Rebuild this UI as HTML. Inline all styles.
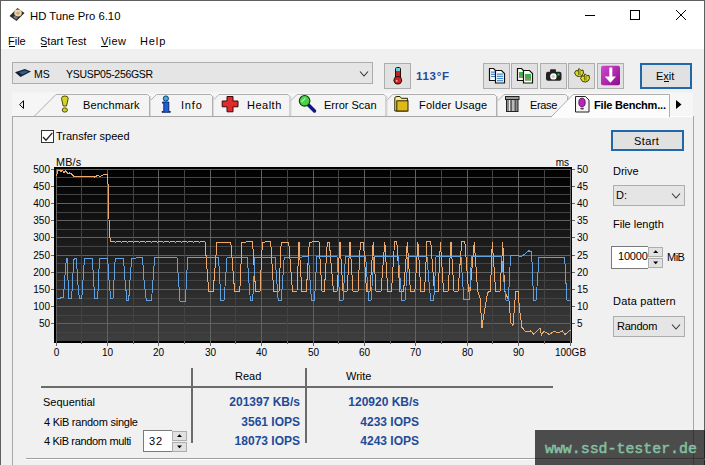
<!DOCTYPE html>
<html><head><meta charset="utf-8"><style>
*{margin:0;padding:0;box-sizing:border-box}
html,body{width:705px;height:465px;overflow:hidden}
body{background:#f0f0f0;position:relative;font-family:"Liberation Sans",sans-serif;font-size:11px;color:#000}
.a{position:absolute;white-space:nowrap;line-height:13px}
.b{font-weight:bold;color:#1f4c99;font-size:12px}
.btn{position:absolute;background:#e1e1e1;border:1px solid #adadad}
svg{position:absolute;left:0;top:0}
</style></head><body>
<!-- title + menu white -->
<div class="a" style="left:0;top:0;width:705px;height:49px;background:#fff"></div>
<div class="a" style="left:0;top:0;width:705px;height:1px;background:#5f5f5f"></div>
<div class="a" style="left:0;top:0;width:1px;height:465px;background:#5f5f5f"></div>
<div class="a" style="left:704px;top:0;width:1px;height:465px;background:#5f5f5f"></div>

<div class="a" style="left:30px;top:10px;font-size:11.3px">HD Tune Pro 6.10</div>
<div class="a" style="left:8px;top:35px;font-size:11px">File</div>
<div class="a" style="left:40px;top:35px;font-size:11px">Start Test</div>
<div class="a" style="left:101px;top:35px;font-size:11px;letter-spacing:0.4px">View</div>
<div class="a" style="left:140px;top:35px;font-size:11px;letter-spacing:0.9px">Help</div>

<!-- drive combo -->
<div class="btn" style="left:12px;top:62px;width:361px;height:22px;background:#e5e5e5;border-color:#adadad"></div>
<div class="a" style="left:34px;top:68px;font-size:10.5px">MS</div>
<div class="a" style="left:66px;top:68px;font-size:10.5px;letter-spacing:-0.3px">YSUSP05-256GSR</div>

<!-- thermometer button -->
<div class="btn" style="left:384px;top:63px;width:27px;height:26px"></div>
<div class="a b" style="left:416px;top:70px;font-size:11.5px;letter-spacing:0.7px">113°F</div>

<!-- toolbar buttons -->
<div class="btn" style="left:483px;top:63px;width:27px;height:26px"></div>
<div class="btn" style="left:511px;top:63px;width:27px;height:26px"></div>
<div class="btn" style="left:540px;top:63px;width:27px;height:26px"></div>
<div class="btn" style="left:568px;top:63px;width:27px;height:26px"></div>
<div class="btn" style="left:597px;top:63px;width:27px;height:26px"></div>

<!-- exit -->
<div class="btn" style="left:640px;top:63px;width:52px;height:26px;border:2px solid #2168a8"></div>
<div class="a" style="left:656px;top:70px;font-size:11px">Exit</div>

<!-- panel -->
<div class="a" style="left:12px;top:116px;width:682px;height:360px;border:1px solid #a8a8a8;border-top-color:#a0a0a0;background:#f0f0f0"></div>


<!-- checkbox -->
<div class="a" style="left:41px;top:130px;width:13px;height:13px;border:1px solid #333;background:#fff"></div>
<div class="a" style="left:56px;top:130px;font-size:11px">Transfer speed</div>

<!-- right controls -->
<div class="btn" style="left:611px;top:130px;width:73px;height:21px;border:2px solid #2168a8"></div>
<div class="a" style="left:634px;top:135px;font-size:11px;letter-spacing:0.4px">Start</div>
<div class="a" style="left:613px;top:165px;font-size:11px">Drive</div>
<div class="btn" style="left:613px;top:185px;width:72px;height:21px;background:#e5e5e5"></div>
<div class="a" style="left:616px;top:189px;font-size:11px">D:</div>
<div class="a" style="left:613px;top:218px;font-size:11px">File length</div>
<div class="a" style="left:611px;top:246px;width:37px;height:23px;border:1px solid #7a7a7a;border-right:none;background:#fff"></div>
<div class="a" style="left:618px;top:250px;font-size:11px;letter-spacing:-0.2px">10000</div>
<div class="btn" style="left:648px;top:247px;width:15px;height:10px"></div>
<div class="btn" style="left:648px;top:258px;width:15px;height:10px"></div>
<div class="a" style="left:667px;top:251px;font-size:11px;letter-spacing:-0.5px">MiB</div>
<div class="a" style="left:613px;top:295px;font-size:11px;letter-spacing:0.2px">Data pattern</div>
<div class="btn" style="left:613px;top:316px;width:72px;height:21px;background:#e5e5e5"></div>
<div class="a" style="left:617px;top:320px;font-size:11px;letter-spacing:-0.25px">Random</div>

<!-- table -->
<div class="a" style="left:235px;top:370px;font-size:11px">Read</div>
<div class="a" style="left:346px;top:370px;font-size:11px">Write</div>
<div class="a" style="left:43px;top:396px;font-size:11px">Sequential</div>
<div class="a" style="left:44px;top:416px;font-size:11px;letter-spacing:-0.25px">4 KiB random single</div>
<div class="a" style="left:44px;top:435px;font-size:11px;letter-spacing:-0.33px">4 KiB random multi</div>
<div class="a b" style="left:229px;top:396px;width:71px;text-align:right">201397 KB/s</div>
<div class="a b" style="left:229px;top:416px;width:71px;text-align:right">3561 IOPS</div>
<div class="a b" style="left:229px;top:435px;width:71px;text-align:right">18073 IOPS</div>
<div class="a b" style="left:348px;top:396px;width:71px;text-align:right">120920 KB/s</div>
<div class="a b" style="left:348px;top:416px;width:71px;text-align:right">4233 IOPS</div>
<div class="a b" style="left:348px;top:435px;width:71px;text-align:right">4243 IOPS</div>
<div class="a" style="left:143px;top:430px;width:29px;height:22px;border:1px solid #7a7a7a;border-right:none;background:#fff"></div>
<div class="a" style="left:149px;top:435px;font-size:11px;letter-spacing:0.8px">32</div>
<div class="btn" style="left:172px;top:431px;width:15px;height:10px"></div>
<div class="btn" style="left:172px;top:442px;width:15px;height:10px"></div>
<div class="a" style="left:41px;top:386px;width:512px;height:2px;background:#6b6b6b"></div>
<div class="a" style="left:191px;top:368px;width:2px;height:75px;background:#6b6b6b"></div>
<div class="a" style="left:305px;top:368px;width:2px;height:75px;background:#6b6b6b"></div>
<div class="a" style="left:26px;top:458px;width:680px;height:1px;background:#a0a0a0"></div>
<div class="a" style="left:26px;top:459px;width:680px;height:1px;background:#fff"></div>

<svg id="ui" width="705" height="465" viewBox="0 0 705 465"><g shape-rendering="crispEdges" stroke="#000" fill="none"><line x1="585" y1="15.5" x2="595" y2="15.5"/><rect x="630.5" y="10.5" width="9" height="9"/></g><g stroke="#000" stroke-width="1" fill="none"><line x1="676" y1="10" x2="686" y2="20"/><line x1="686" y1="10" x2="676" y2="20"/></g><g shape-rendering="crispEdges" stroke="#000"><line x1="9" y1="46.5" x2="15" y2="46.5"/><line x1="664" y1="81.5" x2="669" y2="81.5"/><line x1="41" y1="46.5" x2="47" y2="46.5"/><line x1="101" y1="46.5" x2="108" y2="46.5"/></g><polygon points="17.5,8 24.5,13 16.5,21 9.5,16" fill="#2d2b28"/><ellipse cx="18" cy="13" rx="3.8" ry="3.4" fill="#ead4ac"/><ellipse cx="18" cy="13.2" rx="1.6" ry="1.4" fill="#c9a774"/><polygon points="13,17 15,15.5 18,18 16,19.5" fill="#7a7a7a"/><polygon points="15,72.3 24.8,69 31,71.6 20.5,77" fill="#14202e"/><polygon points="19,72.3 25,70.3 28.5,71.8 22,74.8" fill="#2f5b8c"/><polyline points="360,71.5 364.0,76.0 368,71.5" fill="none" stroke="#333" stroke-width="1.1"/><polyline points="672,193.5 676.0,198.0 680,193.5" fill="none" stroke="#333" stroke-width="1.1"/><polyline points="672,324.5 676.0,329.0 680,324.5" fill="none" stroke="#333" stroke-width="1.1"/><rect x="395" y="67" width="6" height="12" rx="2.5" fill="#1e1010"/><rect x="396" y="68" width="4" height="3" fill="#6ad0d8"/><rect x="396" y="71" width="4" height="8" fill="#c82020"/><circle cx="397.8" cy="80.2" r="4.3" fill="#1e1010"/><circle cx="397.8" cy="80.2" r="3.3" fill="#d02020"/><circle cx="396.7" cy="80.8" r="0.9" fill="#f4c0c0"/><path d="M489.5,68.5 h4 l3,3 v9 h-7 z" fill="#fff" stroke="#111" stroke-width="1.2"/><rect x="491.0" y="71.5" width="4" height="1.2" fill="#3a88d0"/><rect x="491.0" y="73.7" width="4" height="1.2" fill="#3a88d0"/><rect x="491.0" y="75.9" width="4" height="1.2" fill="#3a88d0"/><path d="M495.5,70.5 h6 l3,3 v9.5 h-9 z" fill="#fff" stroke="#111" stroke-width="1.2"/><rect x="497.0" y="73.5" width="6" height="1.2" fill="#3a88d0"/><rect x="497.0" y="75.7" width="6" height="1.2" fill="#3a88d0"/><rect x="497.0" y="77.9" width="6" height="1.2" fill="#3a88d0"/><rect x="497.0" y="80.1" width="6" height="1.2" fill="#3a88d0"/><path d="M517.5,68.5 h4 l3,3 v9 h-7 z" fill="#fff" stroke="#111" stroke-width="1.2"/><rect x="519.0" y="72.0" width="4" height="6" fill="#3cae4c"/><rect x="519.0" y="75.5" width="4" height="2.5" fill="#7a9c5a"/><path d="M523.5,70.5 h6 l3,3 v9.5 h-9 z" fill="#fff" stroke="#111" stroke-width="1.2"/><rect x="525.0" y="74.0" width="6" height="6.5" fill="#3cae4c"/><rect x="525.0" y="78.0" width="6" height="2.5" fill="#7a9c5a"/><rect x="546" y="71.8" width="15.5" height="9" rx="2" fill="#222"/><rect x="550" y="69.3" width="6" height="3" rx="1" fill="#222"/><circle cx="553.4" cy="76.4" r="3.2" fill="#fff"/><circle cx="553.4" cy="76.4" r="1.6" fill="#cfcfcf"/><rect x="557.5" y="73.5" width="2" height="2" fill="#2fc04a"/><g fill="#d8dc28" stroke="#3e3e06" stroke-width="1"><path d="M574.5,73 L576,70.5 L578,71 L579,68.5 L581,70.5 L583,70 L583.5,73 L582,75.5 L579.5,76.5 L576.5,76 Z"/><path d="M580.5,78.5 L582,75.8 L584,76.2 L585,73.8 L587,75.8 L589,75.3 L589.5,78.5 L588,81 L585.5,82 L582.5,81.5 Z"/></g><g stroke="#5a5a08" stroke-width="0.8"><line x1="578.5" y1="70" x2="578.5" y2="75"/><line x1="580" y1="70.5" x2="580" y2="75"/><line x1="584.5" y1="75.5" x2="584.5" y2="80.5"/><line x1="586" y1="76" x2="586" y2="80.5"/></g><defs><linearGradient id="mg" x1="0" y1="0" x2="1" y2="1"><stop offset="0" stop-color="#d24ad2"/><stop offset="1" stop-color="#8a0c8a"/></linearGradient></defs><rect x="601" y="65.7" width="19" height="19.5" rx="2" fill="url(#mg)"/><rect x="609.3" y="67.5" width="3" height="10.5" fill="#fff"/><polygon points="604.8,76.5 616,76.5 610.4,82.8" fill="#fff"/><rect x="12" y="92.5" width="681" height="23.5" fill="#f6f6f6"/><path d="M482,116.5 L504,94.5 H565.5 L567.5,96.5 V116.5" fill="#f4f4f4" stroke="#b0b0b0" stroke-width="1"/><line x1="568.5" y1="96" x2="568.5" y2="116" stroke="#d8d8d8"/><path d="M370.7,116.5 L392.7,94.5 H494.5 L496.5,96.5 V116.5" fill="#f4f4f4" stroke="#b0b0b0" stroke-width="1"/><line x1="497.5" y1="96" x2="497.5" y2="116" stroke="#d8d8d8"/><path d="M275,116.5 L297,94.5 H384.0 L386.0,96.5 V116.5" fill="#f4f4f4" stroke="#b0b0b0" stroke-width="1"/><line x1="387.0" y1="96" x2="387.0" y2="116" stroke="#d8d8d8"/><path d="M197,116.5 L219,94.5 H288.0 L290.0,96.5 V116.5" fill="#f4f4f4" stroke="#b0b0b0" stroke-width="1"/><line x1="291.0" y1="96" x2="291.0" y2="116" stroke="#d8d8d8"/><path d="M134.5,116.5 L156.5,94.5 H210.5 L212.5,96.5 V116.5" fill="#f4f4f4" stroke="#b0b0b0" stroke-width="1"/><line x1="213.5" y1="96" x2="213.5" y2="116" stroke="#d8d8d8"/><path d="M34,116.5 L56,94.5 H147.5 L149.5,96.5 V116.5" fill="#f4f4f4" stroke="#b0b0b0" stroke-width="1"/><line x1="150.5" y1="96" x2="150.5" y2="116" stroke="#d8d8d8"/><g shape-rendering="crispEdges"><line x1="12" y1="116.5" x2="551" y2="116.5" stroke="#a8a8a8"/><line x1="670" y1="116.5" x2="693" y2="116.5" stroke="#ffffff"/><line x1="12.5" y1="116" x2="12.5" y2="465" stroke="#a8a8a8"/><line x1="693.5" y1="116" x2="693.5" y2="465" stroke="#a8a8a8"/></g><path d="M551,117 L573,94.5 H669.5 V117" fill="#fcfcfc" stroke="#b0b0b0" stroke-width="1"/><rect x="552" y="116" width="117" height="2" fill="#fcfcfc"/><polygon points="23.5,100.8 19.6,104.6 23.5,108.4" fill="none" stroke="#000" stroke-width="1"/><polygon points="676,100 681.5,104.5 676,109" fill="#000"/><path d="M61.5,98.5 Q61.5,96 64.8,96 Q68.2,96 68.2,98.5 L66.5,106 H63.2 Z" fill="#d6d622" stroke="#4a4a10" stroke-width="1"/><ellipse cx="64.8" cy="110" rx="2.6" ry="2.1" fill="#d6d622" stroke="#4a4a10" stroke-width="1"/><circle cx="165.9" cy="98.5" r="2.6" fill="#3ab0e8" stroke="#0a2a60" stroke-width="0.9"/><path d="M162.5,102 H168.8 V111.5 H170.3 V112.3 H162 V111.5 H163.8 V103.2 H162.5 Z" fill="#1f5fd8" stroke="#0a1f60" stroke-width="0.9"/><path d="M227,96.5 H233 V101 H238 V106.8 H233 V111.8 H227 V106.8 H222.2 V101 H227 Z" fill="#e02a2a" stroke="#3a0808" stroke-width="1"/><line x1="308.5" y1="105" x2="314.5" y2="111" stroke="#14148a" stroke-width="3.5" stroke-linecap="round"/><circle cx="304.6" cy="100.8" r="5.3" fill="#48d048" stroke="#0a3a0a" stroke-width="1.1"/><path d="M301.5,102 L305.5,98" stroke="#b0f0b0" stroke-width="1.2"/><path d="M394.8,98 Q395,96.5 397,96.5 H400 L401.5,98.3 H407.5 V111 H394.8 Z" fill="#f4ec90" stroke="#2a2400" stroke-width="1"/><rect x="396.8" y="100.8" width="11.2" height="10.2" fill="#e0b818" stroke="#2a2400" stroke-width="1"/><rect x="505.5" y="96.5" width="13.5" height="3" fill="#999" stroke="#222" stroke-width="1"/><rect x="506.5" y="99.5" width="11.5" height="12" fill="#8a8a8a" stroke="#222" stroke-width="1"/><g stroke="#e8e8e8" stroke-width="1"><line x1="509.5" y1="100" x2="509.5" y2="111"/><line x1="513" y1="100" x2="513" y2="111"/></g><g stroke="#444" stroke-width="0.8"><line x1="511.2" y1="100" x2="511.2" y2="111"/><line x1="515.5" y1="100" x2="515.5" y2="111"/></g><path d="M575.5,96.5 H585.5 L589,100 V112 H575.5 Z" fill="#f4f4f4" stroke="#222" stroke-width="1"/><ellipse cx="582" cy="102.5" rx="3.2" ry="4.3" fill="#c020c0" stroke="#3a0a3a" stroke-width="0.8"/><rect x="580.5" y="107.8" width="3.2" height="1.6" fill="#5a2a5a"/><polyline points="43,137 46,140.2 52.3,132.8" fill="none" stroke="#222" stroke-width="1.3"/><polygon points="653.2,253.0 658.2,253.0 655.7,250.2" fill="#000"/><polygon points="653.2,261.5 658.2,261.5 655.7,264.3" fill="#000"/><polygon points="177.0,437.0 182.0,437.0 179.5,434.2" fill="#000"/><polygon points="177.0,445.5 182.0,445.5 179.5,448.3" fill="#000"/></svg>
<!-- CHART -->
<svg id="chart" width="705" height="465" viewBox="0 0 705 465"><defs><linearGradient id="g" x1="0" y1="0" x2="0" y2="1"><stop offset="0" stop-color="#000"/><stop offset="1" stop-color="#3e3e3e"/></linearGradient></defs><rect x="54" y="167" width="518" height="176" fill="#000"/><rect x="56" y="169" width="515" height="172" fill="url(#g)"/><g shape-rendering="crispEdges"><line x1="56" y1="169.5" x2="571" y2="169.5" stroke="#616161"/><line x1="56" y1="177.5" x2="571" y2="177.5" stroke="#434343"/><line x1="56" y1="186.5" x2="571" y2="186.5" stroke="#616161"/><line x1="56" y1="194.5" x2="571" y2="194.5" stroke="#434343"/><line x1="56" y1="203.5" x2="571" y2="203.5" stroke="#616161"/><line x1="56" y1="212.5" x2="571" y2="212.5" stroke="#434343"/><line x1="56" y1="220.5" x2="571" y2="220.5" stroke="#616161"/><line x1="56" y1="229.5" x2="571" y2="229.5" stroke="#434343"/><line x1="56" y1="237.5" x2="571" y2="237.5" stroke="#616161"/><line x1="56" y1="246.5" x2="571" y2="246.5" stroke="#434343"/><line x1="56" y1="255.5" x2="571" y2="255.5" stroke="#616161"/><line x1="56" y1="263.5" x2="571" y2="263.5" stroke="#434343"/><line x1="56" y1="272.5" x2="571" y2="272.5" stroke="#616161"/><line x1="56" y1="280.5" x2="571" y2="280.5" stroke="#434343"/><line x1="56" y1="289.5" x2="571" y2="289.5" stroke="#616161"/><line x1="56" y1="298.5" x2="571" y2="298.5" stroke="#434343"/><line x1="56" y1="306.5" x2="571" y2="306.5" stroke="#616161"/><line x1="56" y1="315.5" x2="571" y2="315.5" stroke="#434343"/><line x1="56" y1="323.5" x2="571" y2="323.5" stroke="#616161"/><line x1="56" y1="332.5" x2="571" y2="332.5" stroke="#434343"/><line x1="56.5" y1="169" x2="56.5" y2="341" stroke="#616161"/><line x1="56.5" y1="341" x2="56.5" y2="346" stroke="#6a6a6a"/><line x1="81.5" y1="169" x2="81.5" y2="341" stroke="#434343"/><line x1="81.5" y1="341" x2="81.5" y2="344" stroke="#6a6a6a"/><line x1="107.5" y1="169" x2="107.5" y2="341" stroke="#616161"/><line x1="107.5" y1="341" x2="107.5" y2="346" stroke="#6a6a6a"/><line x1="133.5" y1="169" x2="133.5" y2="341" stroke="#434343"/><line x1="133.5" y1="341" x2="133.5" y2="344" stroke="#6a6a6a"/><line x1="158.5" y1="169" x2="158.5" y2="341" stroke="#616161"/><line x1="158.5" y1="341" x2="158.5" y2="346" stroke="#6a6a6a"/><line x1="184.5" y1="169" x2="184.5" y2="341" stroke="#434343"/><line x1="184.5" y1="341" x2="184.5" y2="344" stroke="#6a6a6a"/><line x1="210.5" y1="169" x2="210.5" y2="341" stroke="#616161"/><line x1="210.5" y1="341" x2="210.5" y2="346" stroke="#6a6a6a"/><line x1="235.5" y1="169" x2="235.5" y2="341" stroke="#434343"/><line x1="235.5" y1="341" x2="235.5" y2="344" stroke="#6a6a6a"/><line x1="261.5" y1="169" x2="261.5" y2="341" stroke="#616161"/><line x1="261.5" y1="341" x2="261.5" y2="346" stroke="#6a6a6a"/><line x1="287.5" y1="169" x2="287.5" y2="341" stroke="#434343"/><line x1="287.5" y1="341" x2="287.5" y2="344" stroke="#6a6a6a"/><line x1="313.5" y1="169" x2="313.5" y2="341" stroke="#616161"/><line x1="313.5" y1="341" x2="313.5" y2="346" stroke="#6a6a6a"/><line x1="338.5" y1="169" x2="338.5" y2="341" stroke="#434343"/><line x1="338.5" y1="341" x2="338.5" y2="344" stroke="#6a6a6a"/><line x1="364.5" y1="169" x2="364.5" y2="341" stroke="#616161"/><line x1="364.5" y1="341" x2="364.5" y2="346" stroke="#6a6a6a"/><line x1="390.5" y1="169" x2="390.5" y2="341" stroke="#434343"/><line x1="390.5" y1="341" x2="390.5" y2="344" stroke="#6a6a6a"/><line x1="415.5" y1="169" x2="415.5" y2="341" stroke="#616161"/><line x1="415.5" y1="341" x2="415.5" y2="346" stroke="#6a6a6a"/><line x1="441.5" y1="169" x2="441.5" y2="341" stroke="#434343"/><line x1="441.5" y1="341" x2="441.5" y2="344" stroke="#6a6a6a"/><line x1="467.5" y1="169" x2="467.5" y2="341" stroke="#616161"/><line x1="467.5" y1="341" x2="467.5" y2="346" stroke="#6a6a6a"/><line x1="492.5" y1="169" x2="492.5" y2="341" stroke="#434343"/><line x1="492.5" y1="341" x2="492.5" y2="344" stroke="#6a6a6a"/><line x1="518.5" y1="169" x2="518.5" y2="341" stroke="#616161"/><line x1="518.5" y1="341" x2="518.5" y2="346" stroke="#6a6a6a"/><line x1="544.5" y1="169" x2="544.5" y2="341" stroke="#434343"/><line x1="544.5" y1="341" x2="544.5" y2="344" stroke="#6a6a6a"/><line x1="570.5" y1="169" x2="570.5" y2="341" stroke="#616161"/><line x1="570.5" y1="341" x2="570.5" y2="346" stroke="#6a6a6a"/><line x1="51" y1="169.5" x2="54" y2="169.5" stroke="#6a6a6a"/><line x1="572" y1="169.5" x2="575" y2="169.5" stroke="#6a6a6a"/><line x1="51" y1="186.5" x2="54" y2="186.5" stroke="#6a6a6a"/><line x1="572" y1="186.5" x2="575" y2="186.5" stroke="#6a6a6a"/><line x1="51" y1="203.5" x2="54" y2="203.5" stroke="#6a6a6a"/><line x1="572" y1="203.5" x2="575" y2="203.5" stroke="#6a6a6a"/><line x1="51" y1="220.5" x2="54" y2="220.5" stroke="#6a6a6a"/><line x1="572" y1="220.5" x2="575" y2="220.5" stroke="#6a6a6a"/><line x1="51" y1="237.5" x2="54" y2="237.5" stroke="#6a6a6a"/><line x1="572" y1="237.5" x2="575" y2="237.5" stroke="#6a6a6a"/><line x1="51" y1="255.5" x2="54" y2="255.5" stroke="#6a6a6a"/><line x1="572" y1="255.5" x2="575" y2="255.5" stroke="#6a6a6a"/><line x1="51" y1="272.5" x2="54" y2="272.5" stroke="#6a6a6a"/><line x1="572" y1="272.5" x2="575" y2="272.5" stroke="#6a6a6a"/><line x1="51" y1="289.5" x2="54" y2="289.5" stroke="#6a6a6a"/><line x1="572" y1="289.5" x2="575" y2="289.5" stroke="#6a6a6a"/><line x1="51" y1="306.5" x2="54" y2="306.5" stroke="#6a6a6a"/><line x1="572" y1="306.5" x2="575" y2="306.5" stroke="#6a6a6a"/><line x1="51" y1="323.5" x2="54" y2="323.5" stroke="#6a6a6a"/><line x1="572" y1="323.5" x2="575" y2="323.5" stroke="#6a6a6a"/></g><polyline points="56.5,176.0 58.0,170.0 60.0,170.0 61.0,172.0 62.0,170.0 64.0,172.6 65.8,170.5 68.0,174.0 69.5,173.0 71.4,174.0 74.0,176.5 94.0,176.5 94.5,177.2 97.0,175.8 99.0,176.0 101.0,176.0 103.0,175.0 105.5,174.5 107.3,174.0 107.8,174.0 108.5,208.0 109.5,230.0 110.3,242.0 110.3,242.0 113.3,241.2 115.3,242.0 116.3,242.0 119.3,241.2 121.3,242.0 122.3,242.0 125.3,241.2 127.3,242.0 128.3,242.0 131.3,241.2 133.3,242.0 134.3,242.0 137.3,241.2 139.3,242.0 140.3,242.0 143.3,241.2 145.3,242.0 146.3,242.0 149.3,241.2 151.3,242.0 152.3,242.0 155.3,241.2 157.3,242.0 158.3,242.0 161.3,241.2 163.3,242.0 164.3,242.0 167.3,241.2 169.3,242.0 170.3,242.0 173.3,241.2 175.3,242.0 176.3,242.0 179.3,241.2 181.3,242.0 182.3,242.0 185.3,241.2 187.3,242.0 188.3,242.0 191.3,241.2 193.3,242.0 194.3,242.0 197.3,241.2 199.3,242.0 200.3,242.0 203.3,241.2 205.3,242.0 205.0,242.0 208.7,291.0 213.2,291.0 217.0,242.0 230.8,242.0 234.6,291.0 239.8,291.0 242.0,242.0 246.0,242.0 247.0,241.0 250.0,241.0 252.6,242.0 255.6,291.0 260.0,291.0 262.4,242.0 265.0,242.0 266.0,241.0 268.0,241.0 270.7,242.0 273.7,291.0 279.0,291.0 281.2,242.0 288.7,242.0 292.5,291.0 297.0,291.0 299.0,242.0 301.8,291.0 306.3,291.0 309.3,242.0 312.0,242.0 313.0,241.0 316.0,241.0 319.0,242.0 322.0,291.0 324.3,291.0 327.3,242.0 329.3,242.0 333.4,291.0 337.0,291.0 340.0,242.0 343.0,291.0 347.0,291.0 350.0,242.0 353.0,291.0 358.0,291.0 360.4,242.0 363.5,242.0 366.5,291.0 370.0,291.0 373.2,242.0 376.0,291.0 381.0,291.0 384.8,242.0 387.8,291.0 391.5,291.0 394.6,241.0 396.8,241.0 399.8,291.0 403.6,291.0 407.3,242.0 410.4,291.0 414.9,291.0 417.9,242.0 420.9,291.0 424.6,291.0 427.0,241.0 430.7,241.0 434.4,291.0 438.2,291.0 440.4,242.0 443.5,291.0 448.0,291.0 451.0,242.0 454.0,291.0 458.0,291.0 461.8,241.0 464.8,241.0 468.5,291.0 470.0,291.0 474.3,242.0 477.6,291.0 480.0,297.6 482.0,327.7 483.0,320.0 487.3,294.0 488.8,291.0 490.4,291.0 492.3,242.0 495.6,291.0 500.0,291.0 502.8,242.0 504.6,291.0 509.0,301.0 510.9,322.8 513.0,325.6 515.0,300.0 516.0,291.2 518.0,291.2 519.6,310.0 522.0,327.4 525.9,332.0 531.0,330.9 533.7,334.5 537.0,331.0 540.0,328.2 541.5,335.2 543.8,331.3 549.3,334.5 554.0,331.3 558.6,332.9 562.5,330.9 564.9,334.5 570.3,330.2" fill="none" stroke="#eeaa6c" stroke-width="1" shape-rendering="crispEdges"/><polyline points="56.5,298.5 60.5,298.5 61.1,297.3 63.5,297.3 64.6,279.6 65.8,265.4 66.4,258.3 67.0,258.3 68.0,279.6 68.8,298.5 71.7,298.5 72.5,280.0 74.1,258.3 76.5,258.3 77.5,280.0 79.4,298.5 81.8,298.5 83.0,280.0 84.5,258.3 92.4,258.3 93.5,280.0 94.8,298.5 97.7,298.5 98.5,280.0 99.5,258.3 107.7,258.3 109.0,280.0 110.7,298.5 113.0,298.5 114.0,280.0 115.2,258.3 123.5,258.3 125.0,280.0 127.0,300.5 128.7,300.5 130.0,280.0 131.7,258.3 142.5,257.6 144.0,280.0 146.3,300.5 151.5,300.5 153.0,280.0 154.6,257.6 177.0,257.6 178.5,280.0 180.0,301.0 185.4,301.0 186.5,280.0 187.7,257.6 218.5,257.6 219.8,280.0 221.0,300.5 224.0,300.5 225.5,280.0 227.0,257.6 247.3,257.6 248.8,280.0 250.4,300.5 252.6,300.5 253.8,280.0 254.9,257.6 275.2,257.6 276.7,280.0 278.2,300.5 281.2,300.5 282.7,280.0 284.2,257.6 308.5,256.8 310.0,280.0 311.5,300.5 314.5,300.5 315.6,280.0 316.8,256.8 337.0,256.8 338.5,280.0 340.0,300.5 343.0,300.5 344.2,280.0 345.4,256.8 365.7,256.8 367.2,280.0 368.7,300.5 371.0,300.5 372.5,280.0 374.0,256.8 398.3,256.8 400.2,280.0 402.0,300.5 405.0,300.5 406.5,280.0 408.0,256.8 427.0,256.8 428.8,280.0 430.7,300.5 433.7,300.5 434.8,280.0 436.0,256.8 461.0,256.8 462.5,280.0 464.0,299.7 469.3,299.7 470.4,280.0 471.5,256.8 501.6,256.8 503.8,280.0 506.0,300.0 508.3,300.0 509.4,280.0 510.5,256.0 516.5,255.3 521.0,256.8 525.0,254.0 528.6,250.8 531.6,251.5 532.7,280.0 533.8,300.0 536.0,300.0 537.5,280.0 539.0,257.3 564.7,257.3 565.8,280.0 567.0,300.0 570.0,300.0" fill="none" stroke="#62a0de" stroke-width="1" shape-rendering="crispEdges"/><text x="50" y="172.6" text-anchor="end" font-family="Liberation Sans" font-size="10" fill="#000">500</text><text x="577" y="172.6" font-family="Liberation Sans" font-size="10" fill="#000">50</text><text x="50" y="189.6" text-anchor="end" font-family="Liberation Sans" font-size="10" fill="#000">450</text><text x="577" y="189.6" font-family="Liberation Sans" font-size="10" fill="#000">45</text><text x="50" y="206.6" text-anchor="end" font-family="Liberation Sans" font-size="10" fill="#000">400</text><text x="577" y="206.6" font-family="Liberation Sans" font-size="10" fill="#000">40</text><text x="50" y="223.6" text-anchor="end" font-family="Liberation Sans" font-size="10" fill="#000">350</text><text x="577" y="223.6" font-family="Liberation Sans" font-size="10" fill="#000">35</text><text x="50" y="240.6" text-anchor="end" font-family="Liberation Sans" font-size="10" fill="#000">300</text><text x="577" y="240.6" font-family="Liberation Sans" font-size="10" fill="#000">30</text><text x="50" y="258.6" text-anchor="end" font-family="Liberation Sans" font-size="10" fill="#000">250</text><text x="577" y="258.6" font-family="Liberation Sans" font-size="10" fill="#000">25</text><text x="50" y="275.6" text-anchor="end" font-family="Liberation Sans" font-size="10" fill="#000">200</text><text x="577" y="275.6" font-family="Liberation Sans" font-size="10" fill="#000">20</text><text x="50" y="292.6" text-anchor="end" font-family="Liberation Sans" font-size="10" fill="#000">150</text><text x="577" y="292.6" font-family="Liberation Sans" font-size="10" fill="#000">15</text><text x="50" y="309.6" text-anchor="end" font-family="Liberation Sans" font-size="10" fill="#000">100</text><text x="577" y="309.6" font-family="Liberation Sans" font-size="10" fill="#000">10</text><text x="50" y="326.6" text-anchor="end" font-family="Liberation Sans" font-size="10" fill="#000">50</text><text x="577" y="326.6" font-family="Liberation Sans" font-size="10" fill="#000">5</text><text x="56.5" y="356" text-anchor="middle" font-family="Liberation Sans" font-size="10" fill="#000">0</text><text x="107.5" y="356" text-anchor="middle" font-family="Liberation Sans" font-size="10" fill="#000">10</text><text x="158.5" y="356" text-anchor="middle" font-family="Liberation Sans" font-size="10" fill="#000">20</text><text x="210.5" y="356" text-anchor="middle" font-family="Liberation Sans" font-size="10" fill="#000">30</text><text x="261.5" y="356" text-anchor="middle" font-family="Liberation Sans" font-size="10" fill="#000">40</text><text x="313.5" y="356" text-anchor="middle" font-family="Liberation Sans" font-size="10" fill="#000">50</text><text x="364.5" y="356" text-anchor="middle" font-family="Liberation Sans" font-size="10" fill="#000">60</text><text x="415.5" y="356" text-anchor="middle" font-family="Liberation Sans" font-size="10" fill="#000">70</text><text x="467.5" y="356" text-anchor="middle" font-family="Liberation Sans" font-size="10" fill="#000">80</text><text x="518.5" y="356" text-anchor="middle" font-family="Liberation Sans" font-size="10" fill="#000">90</text><text x="570.5" y="356" text-anchor="middle" font-family="Liberation Sans" font-size="10" fill="#000">100GB</text><text x="56" y="165.5" font-family="Liberation Sans" font-size="10.8" letter-spacing="0.2">MB/s</text><text x="569" y="165.5" text-anchor="end" font-family="Liberation Sans" font-size="10" fill="#000">ms</text></svg>

<!-- tab labels -->
<div class="a" style="left:83px;top:99px;font-size:11px;letter-spacing:0.1px">Benchmark</div>
<div class="a" style="left:181px;top:99px;font-size:11px;letter-spacing:0.8px">Info</div>
<div class="a" style="left:247px;top:99px;font-size:11px;letter-spacing:0.5px">Health</div>
<div class="a" style="left:324px;top:99px;font-size:11px">Error Scan</div>
<div class="a" style="left:419px;top:99px;font-size:11px;letter-spacing:0.2px">Folder Usage</div>
<div class="a" style="left:530px;top:99px;font-size:11px;letter-spacing:-0.35px">Erase</div>
<div class="a" style="left:594px;top:99px;font-size:11px;letter-spacing:-0.2px;font-weight:bold">File Benchm...</div>
<!-- watermark -->
<div class="a" style="left:535px;top:430px;width:170px;height:35px;background:rgba(8,8,8,0.71)"></div>
<div class="a" style="left:545px;top:441px;font-family:'Liberation Mono',monospace;font-size:14.9px;line-height:17px;color:#84c0a2;font-weight:normal;-webkit-text-stroke:0.5px #84c0a2">www.ssd-tester.de</div>
</body></html>
